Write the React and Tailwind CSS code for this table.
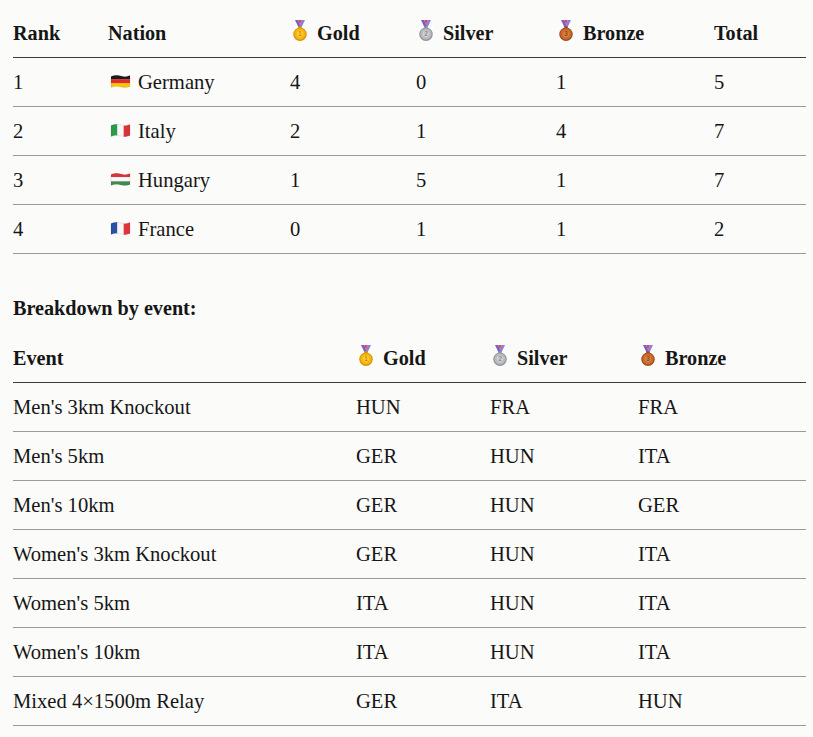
import React from "react";

const medalColors = {
  gold: { fill: "#f5b50a", rim: "#d98f00", inner: "#ffd34d" },
  silver: { fill: "#b7b9bd", rim: "#8e9196", inner: "#d7d9dc" },
  bronze: { fill: "#c7692a", rim: "#9a4a17", inner: "#dd8a4c" },
};

const Medal = ({ kind, num }) => {
  const c = medalColors[kind];
  return (
    <svg width="16" height="21" viewBox="0 0 16 21" className="shrink-0">
      <path d="M3 0 L6.2 0 L8.6 6.5 L6.6 7.5 Z" fill="#6e63c9" />
      <path d="M13 0 L9.8 0 L7.4 6.5 L9.4 7.5 Z" fill="#8a7fe0" />
      <path d="M6.2 0 L8 5 L9.8 0 Z" fill="#e0485a" />
      <rect x="6.3" y="6.3" width="3.4" height="2.6" rx="0.6" fill={c.rim} />
      <circle cx="8" cy="14.2" r="6.7" fill={c.rim} />
      <circle cx="8" cy="14" r="5.7" fill={c.fill} />
      <circle cx="8" cy="14" r="3.4" fill={c.inner} opacity="0.7" />
      <text x="8" y="16.4" textAnchor="middle" fontSize="6.5" fontFamily="Liberation Sans, sans-serif" fontWeight="700" fill={c.rim}>
        {num}
      </text>
    </svg>
  );
};

const Flag = ({ colors, vertical }) => {
  const clip = "M1 2.5 Q6 0.5 11 2 Q16 3.5 20 1.5 L20 12.5 Q16 14.5 11 13 Q6 11.5 1 13.5 Z";
  const id = "f" + colors.join("").replace(/#/g, "");
  return (
    <svg width="21" height="15" viewBox="0 0 21 15" className="shrink-0">
      <defs>
        <clipPath id={id}>
          <path d={clip} />
        </clipPath>
      </defs>
      <g clipPath={"url(#" + id + ")"}>
        {colors.map((col, i) =>
          vertical ? (
            <rect key={i} x={1 + i * (19 / 3)} y="0" width={19 / 3 + 0.2} height="15" fill={col} />
          ) : (
            <rect key={i} x="0" y={1 + i * (12.5 / 3)} width="21" height={12.5 / 3 + 0.2} fill={col} />
          )
        )}
      </g>
      <path d={clip} fill="none" stroke="#00000022" strokeWidth="0.6" />
    </svg>
  );
};

const nations = [
  { rank: 1, name: "Germany", flag: ["#1c1c1c", "#dd2b2b", "#f6c500"], v: false, g: 4, s: 0, b: 1, t: 5 },
  { rank: 2, name: "Italy", flag: ["#2d9a4a", "#f7f7f7", "#d8333b"], v: true, g: 2, s: 1, b: 4, t: 7 },
  { rank: 3, name: "Hungary", flag: ["#d8333b", "#f7f7f7", "#3f8a4c"], v: false, g: 1, s: 5, b: 1, t: 7 },
  { rank: 4, name: "France", flag: ["#2a4fa8", "#f7f7f7", "#e0353d"], v: true, g: 0, s: 1, b: 1, t: 2 },
];

const events = [
  ["Men's 3km Knockout", "HUN", "FRA", "FRA"],
  ["Men's 5km", "GER", "HUN", "ITA"],
  ["Men's 10km", "GER", "HUN", "GER"],
  ["Women's 3km Knockout", "GER", "HUN", "ITA"],
  ["Women's 5km", "ITA", "HUN", "ITA"],
  ["Women's 10km", "ITA", "HUN", "ITA"],
  ["Mixed 4×1500m Relay", "GER", "ITA", "HUN"],
];

const MedalHead = ({ kind, num, label }) => (
  <div className="flex items-center gap-[9px] pl-[2px]">
    <span className="-mt-[4px]">
      <Medal kind={kind} num={num} />
    </span>
    <span>{label}</span>
  </div>
);

export default function App() {
  return (
    <div
      className="min-h-screen bg-[#fbfbf9] text-[#161616] text-[20.6px] pt-[9px] px-[13px]"
      style={{ fontFamily: '"Liberation Serif", "Times New Roman", serif' }}
    >
      <div className="w-[793px]">
        <div className="grid grid-cols-[95px_182px_126px_140px_158px_92px] h-[49px] items-center border-b border-[#3a3a3a] font-bold text-[20.2px]">
          <div>Rank</div>
          <div>Nation</div>
          <MedalHead kind="gold" num="1" label="Gold" />
          <MedalHead kind="silver" num="2" label="Silver" />
          <MedalHead kind="bronze" num="3" label="Bronze" />
          <div>Total</div>
        </div>
        {nations.map((n) => (
          <div
            key={n.rank}
            className="grid grid-cols-[95px_182px_126px_140px_158px_92px] h-[49px] items-center border-b border-[#9a9a9a]"
          >
            <div>{n.rank}</div>
            <div className="flex items-center gap-[7px] pl-[2px]">
              <Flag colors={n.flag} vertical={n.v} />
              <span>{n.name}</span>
            </div>
            <div>{n.g}</div>
            <div>{n.s}</div>
            <div>{n.b}</div>
            <div>{n.t}</div>
          </div>
        ))}
      </div>

      <p className="font-bold text-[20.2px] mt-[40px] mb-[12px] h-[28px] leading-[28px]">Breakdown by event:</p>

      <div className="w-[793px]">
        <div className="grid grid-cols-[343px_134px_148px_168px] h-[49px] items-center border-b border-[#3a3a3a] font-bold text-[20.2px]">
          <div>Event</div>
          <MedalHead kind="gold" num="1" label="Gold" />
          <MedalHead kind="silver" num="2" label="Silver" />
          <MedalHead kind="bronze" num="3" label="Bronze" />
        </div>
        {events.map((e) => (
          <div
            key={e[0]}
            className="grid grid-cols-[343px_134px_148px_168px] h-[49px] items-center border-b border-[#9a9a9a]"
          >
            <div>{e[0]}</div>
            <div>{e[1]}</div>
            <div>{e[2]}</div>
            <div>{e[3]}</div>
          </div>
        ))}
      </div>
    </div>
  );
}
